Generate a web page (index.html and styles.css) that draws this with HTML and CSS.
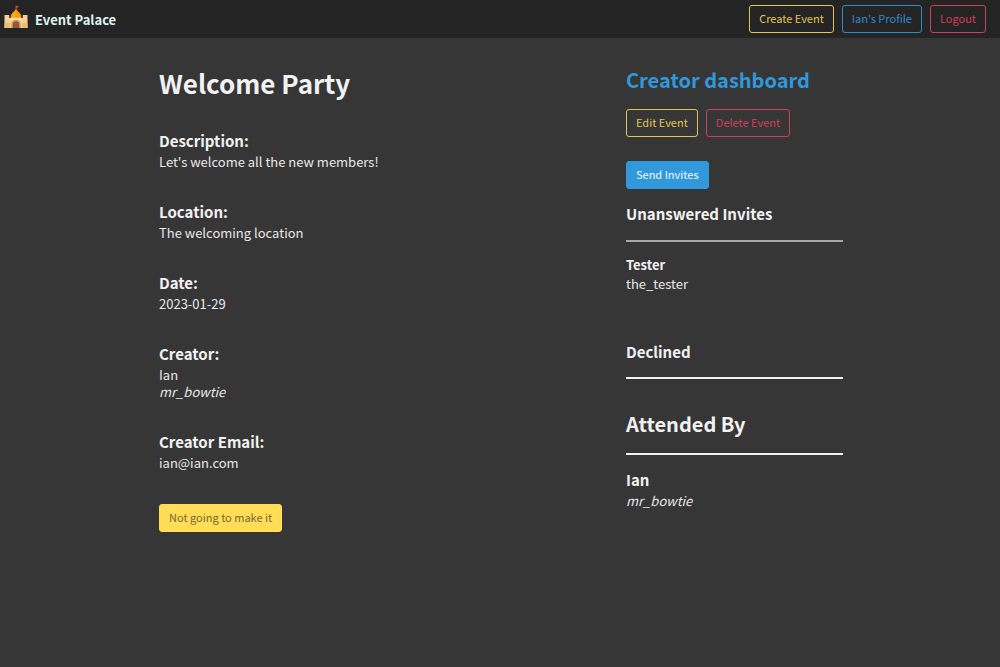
FILE: index.html
```html
<!DOCTYPE html>
<html lang="en">
<head>
<meta charset="utf-8">
<meta name="viewport" content="width=device-width, initial-scale=1">
<title>Event Palace</title>
<link rel="stylesheet" href="styles.css">
</head>
<body>
<header class="navbar">
  <a class="brand" href="#">
    <svg class="brand-icon" viewBox="0 0 24 24" aria-hidden="true">
      <path d="M12 1v4" stroke="#a33b25" stroke-width="1"/>
      <path d="M11.800 .2l3.400 1.500-3.400 1.700z" fill="#e53935"/>
      <path d="M12 3.500c.6 2.500 5.300 4.500 5.300 8 0 1-.3 2-.8 2.500h-9c-.5-.5-.8-1.500-.8-2.500C6.700 8 11.400 6 12 3.500z" fill="#f99a08"/>
      <path d="M11.400 6.500C10 8 8.300 9.500 8.500 12.500h2.300z" fill="#ffb62e"/>
      <path d="M.5 10h4.700v3h13.600v-3h4.700v13H.5z" fill="#f8cf91"/>
      <path d="M6 12.800h12v1.700H6z" fill="#ffe0aa"/>
      <path d="M.5 18h5.500v5H.5zM18 18h5.500v5H18z" fill="#f0bb76"/>
      <path d="M7.500 23v-3.500a4.500 4.500 0 0 1 9 0V23z" fill="#c98b52"/>
      <path d="M9 23v-3.500a3 3 0 0 1 6 0V23z" fill="#8a5a3c"/>
    </svg>
    <span>Event Palace</span>
  </a>
  <nav class="buttons">
    <button class="button warning" type="button">Create Event</button>
    <button class="button info" type="button">Ian's Profile</button>
    <button class="button danger" type="button">Logout</button>
  </nav>
</header>
<main class="columns">
  <section class="details">
    <h1 class="title">Welcome Party</h1>
    <div class="field"><h2 class="heading">Description:</h2><p>Let's welcome all the new members!</p></div>
    <div class="field"><h2 class="heading">Location:</h2><p>The welcoming location</p></div>
    <div class="field"><h2 class="heading">Date:</h2><p>2023-01-29</p></div>
    <div class="field"><h2 class="heading">Creator:</h2><p>Ian</p><p><em>mr_bowtie</em></p></div>
    <div class="field"><h2 class="heading">Creator Email:</h2><p>ian@ian.com</p></div>
    <button class="button decline" type="button">Not going to make it</button>
  </section>
  <aside class="dashboard">
    <h2 class="subtitle accent">Creator dashboard</h2>
    <div class="buttons manage">
      <button class="button warning" type="button">Edit Event</button>
      <button class="button danger" type="button">Delete Event</button>
    </div>
    <button class="button send" type="button">Send Invites</button>
    <section class="invites">
      <h3 class="heading">Unanswered Invites</h3>
      <hr class="rule muted">
      <h4 class="name">Tester</h4>
      <p>the_tester</p>
    </section>
    <section class="declined">
      <h3 class="heading">Declined</h3>
      <hr class="rule">
    </section>
    <section class="attended">
      <h2 class="subtitle">Attended By</h2>
      <hr class="rule">
      <h3 class="heading">Ian</h3>
      <p><em>mr_bowtie</em></p>
    </section>
  </aside>
</main>
</body>
</html>
```
FILE: styles.css
```css
* { box-sizing: border-box; margin: 0; }
html { background: #363636; }
body {
  color: #e8e8e8;
  font: 13px/17px "Noto Sans CJK JP", "Noto Sans", sans-serif;
}
.navbar {
  display: flex;
  align-items: center;
  justify-content: space-between;
  height: 38px;
  padding: 0 14px 0 4px;
  background: #242424;
}
.brand {
  display: flex;
  align-items: center;
  gap: 7px;
  color: #e0f2ef;
  font-weight: 700;
  text-decoration: none;
}
.brand-icon { width: 24px; height: 24px; margin-bottom: 4px; }
.buttons { display: flex; gap: 8px; }
.button {
  display: block;
  height: 28px;
  padding: 0 9px 2px;
  border: 1px solid;
  border-radius: 3px;
  background: transparent;
  font: 11px/16px "Noto Sans CJK JP", "Noto Sans", sans-serif;
  white-space: nowrap;
}
.warning { color: #e3c651; border-color: #e3c651; }
.info { color: #308bcb; border-color: #308bcb; }
.danger { color: #d13f5e; border-color: #d13f5e; }
.send { color: #f2f8fc; background: #3298dc; border-color: #3298dc; }
.decline { color: #766832; background: #ffdd57; border-color: #ffdd57; margin-top: 33px; }
.columns {
  display: grid;
  grid-template-columns: minmax(0, 467fr) minmax(0, 217fr);
  padding: 28px 15.7% 0 15.9%;
}
.title { margin-bottom: 30px; color: #f2f2f2; font-size: 26px; line-height: 34px; font-weight: 700; }
.heading { margin-bottom: 1px; color: #f2f2f2; font-size: 15px; line-height: 22px; font-weight: 700; }
.subtitle { color: #f2f2f2; font-size: 20px; line-height: 28px; font-weight: 700; }
.name { color: #f2f2f2; font-size: 13px; line-height: 20px; font-weight: 700; }
.accent { color: #3298dc; }
.field + .field { margin-top: 31px; }
.manage { margin: 15px 0 24px; }
.rule { height: 2px; border: 0; background: #f0f0f0; }
.muted { background: #a8a8a8; }
.invites { margin-top: 14px; }
.invites .rule { margin: 15px 0 13px; }
.declined { margin-top: 49px; }
.declined .rule { margin-top: 14px; }
.attended { margin-top: 31px; }
.attended .rule { margin: 15px 0 14px; }
```
